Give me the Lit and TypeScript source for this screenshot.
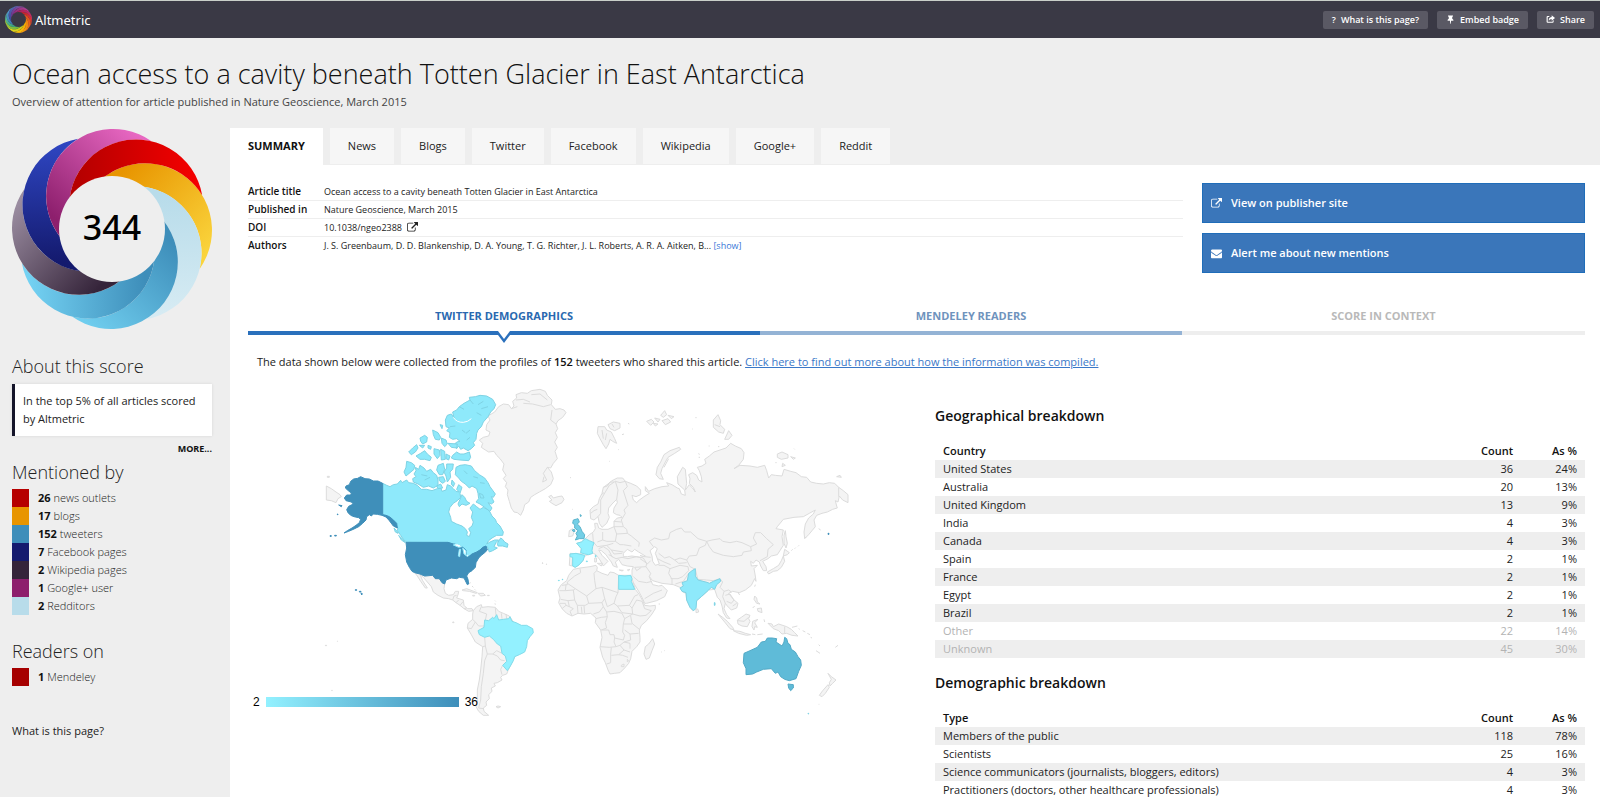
import { LitElement, html, svg, css } from "lit";
import { customElement, property } from "lit/decorators.js";

type Stop = [string, string];

/** Ring of overlapping discs, each one tucked under its clockwise neighbour. */
@customElement("swirl-ring")
class SwirlRing extends LitElement {
  @property({ attribute: false }) colors: Stop[] = [];
  @property({ type: Number }) start = 0;
  @property({ type: Number }) hole = 53;
  @property() holeColor = "#eee";

  static styles = css`
    :host { display: block; }
    svg { display: block; width: 100%; height: 100%; }
  `;

  render() {
    const n = this.colors.length;
    const R = 67;
    const off = 33;
    const step = 360 / n;
    const half = (step / 2) * (Math.PI / 180);
    const mid = off * Math.cos(half);
    const reach = Math.sqrt(R * R - (off * Math.sin(half)) ** 2);
    const pt = (deg: number, r: number) => [
      +(100 + r * Math.cos((deg * Math.PI) / 180)).toFixed(2),
      +(100 + r * Math.sin((deg * Math.PI) / 180)).toFixed(2),
    ];
    return html`<svg viewBox="0 0 200 200" aria-hidden="true">
      ${this.colors.map(([from, to], i) => {
        const a = this.start + i * step;
        const [ox, oy] = pt(a + step / 2, mid + reach);
        const [ix, iy] = pt(a + step / 2, mid - reach);
        const [gx, gy] = pt(a - 85, 53);
        const [hx, hy] = pt(a + 15, 96);
        return svg`
          <linearGradient id="g${i}" gradientUnits="userSpaceOnUse" x1=${gx} y1=${gy} x2=${hx} y2=${hy}>
            <stop offset="0" stop-color=${from}></stop><stop offset="1" stop-color=${to}></stop>
          </linearGradient>
          <path fill="url(#g${i})" d="M${ox},${oy} A${R},${R} 0 1 0 ${ix},${iy} A${R},${R} 0 0 1 ${ox},${oy}Z"></path>`;
      })}
      <circle cx="100" cy="100" r=${this.hole} fill=${this.holeColor}></circle>
    </svg>`;
  }
}

@customElement("world-map")
class WorldMap extends LitElement {
  static styles = css`
    :host { display: block; }
    svg { display: block; width: 100%; height: auto; }
    path { stroke: #dcdcdc; stroke-width: 3; stroke-linejoin: round; fill: #f4f4f4; }
    .line { fill: none; }
    .sea { fill: #fff; }
    .c2 { fill: #93f1ff; stroke: #82dcea; }
    .c4 { fill: #8ee9fb; stroke: #7fd3e4; }
    .c13 { fill: #73cfe6; stroke: #5cb4cc; }
    .c20 { fill: #5fbbd8; stroke: #52a9c6; }
    .c36 { fill: #3f8fba; stroke: #3f8fba; }
    .sound { stroke: #fff; }
    .fjord { stroke: #7fd3e4; }
    .lake { stroke: #8ee9fb; }
  `;

  render() {
    return html`<svg viewBox="0 0 1680 1035" role="img" aria-label="Tweeters by country">
      <g>
        <path d="M508,180 L520,172 536,168 540,156 528,150 530,134 540,120 534,108 554,96 566,80 580,72 596,74 604,86 612,78 608,64 620,54 618,44 634,38 652,40 664,32 690,28 706,34 712,46 726,60 724,74 736,88 750,86 762,90 768,98 758,112 744,122 738,132 743,146 736,158 742,172 734,186 742,202 735,214 742,236 730,250 722,264 712,262 724,276 730,296 722,314 706,326 688,336 674,344 662,352 656,366 644,374 640,390 632,406 622,398 612,396 604,384 598,364 592,344 594,330 586,320 590,308 580,296 588,286 578,270 582,252 570,236 560,226 552,214 536,216 526,210 514,202 518,190Z"></path>
        <path class="line" d="M604,86 L622,80 M618,60 L640,58 660,66 M664,44 L690,42 712,60 M640,70 L668,72 700,80 722,74 M726,90 L722,120 738,132 M712,262 L700,280 710,300 698,306 702,290"></path>
        <path d="M716,350 L724,346 730,354 744,350 756,348 762,358 756,368 738,377 726,370 718,364 726,360Z"></path>
        <path d="M49,318 L64,326 78,336 90,344 94,350 84,356 78,368 64,362 49,360Z M52,289h6v3h-6z"></path>
        <path class="c4" d="M218,310 L230,316 240,320 250,314 262,312 272,301 276,308 290,300 296,308 310,310 322,316 334,328 350,328 366,332 382,326 392,322 396,334 408,330 412,314 422,318 430,326 438,334 448,336 440,328 446,314 456,322 450,340 452,352 442,362 430,370 420,382 416,396 422,412 424,424 440,432 456,438 466,446 472,456 470,466 478,470 482,458 476,446 486,438 490,426 484,412 488,396 480,384 490,372 500,380 510,388 520,382 532,388 540,396 546,408 556,418 560,428 570,438 580,456 578,466 560,466 546,474 536,482 530,492 540,486 554,480 566,480 558,488 552,500 562,504 548,512 538,516 532,500 520,504 500,516 472,530 462,510 446,496 414,488 290,487 280,478 272,466 262,452 264,444 250,430 238,416 228,408 218,404Z"></path>
        <path class="c4" d="M438,262 L450,256 466,254 484,258 494,272 508,284 524,294 534,308 540,320 556,342 550,352 544,350 552,366 544,372 534,368 546,384 540,394 524,382 510,372 498,366 506,356 504,340 500,326 486,318 478,324 466,312 454,304 446,294 436,284Z"></path>
        <path class="c4" d="M290,244 L304,248 314,256 312,268 300,278 288,288 282,276 288,262Z M316,262 L326,268 330,256 342,264 350,274 362,268 370,278 380,286 384,300 384,316 370,324 356,318 340,322 324,312 310,306 308,296 318,290 312,282 318,272Z M384,256 L400,250 404,268 398,284 388,284 380,270Z M410,252 L430,252 428,268 420,276 422,292 412,306 408,288 402,276 410,264Z M386,292 L400,290 406,304 398,310 388,302Z M380,318 L392,312 398,324 384,326Z M426,300 l8,10 -4,10 -6,-8z"></path>
        <path class="c4" d="M448,80 L462,70 480,60 478,52 496,50 510,46 530,48 548,58 557,74 552,86 542,96 534,110 520,126 514,140 504,150 500,160 498,178 490,188 494,196 484,206 474,212 460,204 452,208 446,198 440,206 430,196 440,186 450,184 440,176 428,178 418,172 420,158 410,152 418,144 408,140 406,120 412,106 424,102 432,114 428,96 440,90Z"></path>
        <path class="c4" d="M428,226 L440,216 450,222 462,222 478,216 482,232 476,242 450,240 432,238 424,234Z M318,228 L332,220 344,212 352,222 364,232 360,242 344,238 330,238Z M296,216 L308,204 320,194 324,204 316,216 304,224Z M330,174 L344,166 352,172 350,186 338,192 332,184Z M368,150 L384,158 392,172 388,180 376,178 370,164Z M394,174 L408,180 412,192 404,200 396,190Z M372,206 L388,210 390,226 382,236 372,222Z M392,208 L404,214 406,238 394,240Z M414,190 L442,192 440,204 424,202Z M390,134 l8,2 -2,10z M328,196 l16,0 -6,8z M354,196 l10,4 -2,8 -8,-4z M408,222 l12,6 -4,12 -8,-4z"></path>
        <path class="c4" d="M456,344 L464,352 470,364 480,370 468,376 456,372 448,380 444,372 450,358Z M508,340 l10,4 4,10 -10,0z M562,490 L572,474 578,478 584,486 594,492 592,502 578,498 564,498Z"></path>
        <path class="line sound" d="M430,112 Q440,128 460,127 Q474,126 484,116"></path>
        <path class="line fjord" d="M448,80 l14,8 M480,60 l10,12 M520,64 l-16,10 M534,80 l-20,6 M500,98 l14,8 M420,140 l16,-2 M456,150 l10,8 M480,150 l-12,10 M470,180 l10,-8 M334,284 l18,4 M344,300 l16,-8 M462,272 l10,10 M490,290 l14,4 M510,308 l14,2"></path>
        <path class="c36" d="M218,310 L204,303 190,303 178,297 165,296 152,290 143,295 131,297 122,304 118,314 108,318 106,324 116,333 124,339 122,345 110,345 103,354 108,362 124,366 130,372 116,379 110,389 114,398 122,406 132,410 146,413 152,418 148,428 138,436 126,444 112,452 102,459 116,454 132,447 146,440 158,430 168,420 170,410 178,404 184,408 190,402 202,403 216,406 228,411 238,422 250,438 262,444 260,430 248,418 238,410 228,406 218,404Z M86,375l10,2 -2,3z M74,466h5v2h-5z M60,467h4v2h-4z M82,402h2v2h-2z"></path>
        <path class="c4" d="M252,444 l8,8 4,8 -8,-4z M266,466 l12,12 8,10 -12,-8z"></path>
      </g>
      <g transform="translate(0 480)">
        <path d="M314,98 L330,102 344,108 368,106 376,116 388,116 396,128 404,132 402,146 406,160 416,166 430,164 436,154 446,154 444,164 440,174 460,180 462,196 472,206 486,206 490,212 476,214 462,206 450,196 438,188 428,180 416,176 400,174 384,166 370,156 364,140 352,126 340,112 330,104 338,122 352,144 346,144 332,124 322,108Z"></path>
        <path class="line" d="M428,180 L432,168 440,166 M438,188 L446,180 M450,196 L460,184 M462,206 L470,204"></path>
        <path d="M456,150 L470,146 486,152 502,158 498,160 478,154 460,152Z M504,160 L520,160 526,166 512,168Z M488,166h6v2h-6z M532,166h6v1h-6z M478,130l4,-2 M486,138l4,4 M494,148l3,3 M555,182l2,2 M555,190l1,4"></path>
        <path d="M490,212 L500,200 514,194 516,202 534,200 556,202 566,214 580,220 598,228 620,260 640,290 620,340 594,392 590,402 578,406 572,412 576,420 562,428 552,430 556,438 544,444 546,454 536,464 538,476 528,486 530,496 520,504 522,514 536,526 520,526 506,514 498,500 502,484 502,450 508,420 512,390 516,350 518,320 496,306 484,284 472,264 474,250 488,238 488,222Z"></path>
        <path class="line" d="M514,200 L508,214 530,222 526,240 M556,204 558,226 M574,220 576,236 M588,222 590,236 M474,264 L484,266 496,246 488,238 M496,246 L506,258 522,258 M524,292 L526,318 518,320 M526,318 L532,342 548,342 560,332 576,340 M548,342 L562,348 572,360 584,362 M578,376 L572,388 576,404 M532,342 L524,362 520,400 514,440 512,480 506,504 520,506"></path>
        <path class="c2" d="M524,240 L536,242 548,232 552,236 560,224 566,240 580,238 596,236 600,230 606,244 618,248 634,256 650,256 668,266 670,278 660,290 652,302 650,320 644,336 628,344 614,350 610,362 600,380 592,392 578,376 590,364 586,348 576,340 572,318 562,312 550,298 538,288 524,292 508,284 504,272 522,262Z"></path>
        <path class="c36" d="M288,7 L414,7 430,12 446,14 458,22 468,30 470,50 486,42 500,36 510,30 518,22 528,18 532,30 524,38 514,46 506,54 498,68 496,82 486,92 476,98 470,108 474,118 476,132 472,134 466,122 462,114 448,112 440,116 424,114 408,120 404,132 396,128 388,116 376,116 368,106 344,108 330,102 314,98 306,94 298,82 290,66 286,44 290,24Z M136,149h4v2h-4z M148,154h5v2h-5z M153,159l4,2 -2,4z"></path>
        <path class="sea lake" d="M430,15 Q444,6 456,20 L446,22Z M448,28 l4,0 -3,22 -4,-2z M458,24 l10,8 0,14 -6,-4z M468,46 l16,-6 -12,10z"></path>
        <path d="M558,500 l6,-2 8,2 -8,4z M428,246h4v2h-4z M46,316h4v1h-4z M82,303h1v1h-1z M65,451h2v1h-2z M697,69h2v1h-2z M709,72h1v1h-1z"></path>
      </g>
      <g transform="translate(690 0)">
        <path d="M150,390 L160,380 174,372 178,356 186,340 190,322 204,312 216,302 232,294 248,294 256,304 272,310 290,318 302,330 302,344 288,350 276,346 280,360 290,368 298,360 312,350 328,340 316,332 316,320 326,334 344,326 366,320 386,318 380,308 396,314 412,324 418,326 424,342 436,346 434,330 414,312 412,290 420,276 428,262 436,268 438,290 440,310 436,330 448,314 462,330 466,336 460,322 448,310 450,296 446,284 458,278 470,286 476,300 486,306 484,290 478,272 472,262 486,258 498,250 494,238 508,228 522,216 540,210 558,204 572,190 586,198 604,206 612,218 610,238 596,256 582,266 600,256 630,258 652,262 674,256 680,272 686,294 694,284 706,286 726,288 732,268 752,274 768,278 784,290 800,292 812,306 830,310 850,312 868,308 884,310 896,322 910,332 924,344 924,368 908,360 898,348 894,366 886,362 890,378 892,384 878,388 862,396 846,400 830,406 822,420 826,440 816,452 806,464 794,476 792,456 796,432 806,414 820,402 826,390 808,400 790,410 762,412 730,418 712,440 708,446 730,450 726,470 730,496 712,524 694,528 684,536 668,544 678,560 680,572 670,572 662,558 658,546 648,540 640,550 632,544 634,558 652,556 642,566 646,588 648,604 644,596 634,616 616,630 598,638 578,634 566,640 580,658 594,670 590,684 574,690 562,678 556,670 552,686 560,704 570,716 560,714 550,698 546,678 540,660 532,652 524,628 506,630 484,650 470,662 466,686 458,692 450,682 440,660 438,640 428,636 420,622 400,614 384,612 366,610 352,606 338,602 328,590 338,614 356,618 366,616 382,632 374,650 350,662 320,670 314,670 306,652 296,634 284,614 274,598 276,586 276,570 280,560 262,558 246,554 240,544 236,538 226,546 232,562 220,558 214,546 206,536 198,524 184,512 176,510 186,526 204,544 196,552 190,558 180,540 168,524 160,520 150,522 140,526 132,530 128,544 116,556 104,562 98,558 88,556 90,520 122,522 124,506 110,490 124,486 136,476 148,464 160,456 166,446 164,430 172,430 176,444 186,448 204,448 222,440 222,424 232,414 246,412 240,406 230,404 220,398 222,384 232,368 230,358 216,372 206,384 204,400 208,412 200,430 186,442 178,430 174,410 162,420 152,416Z"></path>
        <path class="sea" d="M250,520 L262,508 276,516 284,508 296,516 316,528 300,532 276,528 262,530 250,530Z M330,512 L344,500 352,506 346,520 352,536 358,552 346,556 338,544 336,528Z"></path>
        <path class="line" d="M256,304 L262,320 250,332 264,376 252,390 256,400 244,420 250,440 260,448 262,460 274,468 298,488 296,500 M174,410 L182,400 182,360 196,336 208,316 226,304 240,308 256,304 M226,304 L234,330 230,358 M300,526 L314,530 332,532 M300,536 L312,544 322,552 332,542 M896,322 L896,350 M340,500 L328,484 344,474 364,480 386,476 390,458 410,448 424,444 434,456 452,456 474,476 500,484 496,496 478,504 470,526 448,528 440,540 420,534 404,540 388,530 374,534 356,520 M500,484 L516,480 540,476 548,484 570,488 590,484 606,488 632,500 634,512 610,516 606,526 580,530 550,526 520,516 508,500 500,484 M632,500 L650,492 640,474 646,458 662,458 680,476 700,494 684,508 682,530 660,542 M188,456 L188,480 200,484 226,484 230,462 222,440 M230,462 L262,460 M222,440 L250,440 M222,424 L244,426 M226,484 L240,494 250,494 274,498 M158,460 L160,486 172,500 200,496 220,490 M188,480 L172,486 M176,506 L190,500 206,510 216,530 228,536 246,532 M200,496 L214,510 250,516 M214,510 L222,522 246,520 M206,524 L218,530 M246,532 L264,536 290,530 310,534 320,550 318,560 284,562 M318,560 L332,580 328,590 M284,562 L290,572 304,562 M280,590 L296,604 320,608 336,604 M314,656 L340,640 366,630 M356,556 L372,556 390,566 386,580 396,598 396,612 M390,566 L420,556 444,560 446,572 428,590 414,596 392,596 M352,536 L372,546 392,554 M404,540 L416,550 440,548 M440,540 L450,560 466,568 474,600 504,608 506,628 M474,598 L500,600 520,602 540,596 548,606 540,622 552,634 566,630 574,636 M552,634 L548,650 556,670 M556,646 L570,642 582,660 574,670 560,664 M578,678 L590,670 M98,530 L96,556 M406,612 L430,604 446,580"></path>
        <path class="line" d="M190,322 L202,318 210,306 222,306 M152,400 L162,392 172,388 M184,344 L192,338"></path>
        <path d="M352,262 L362,246 372,224 390,212 418,202 422,208 404,220 384,232 376,246 366,266 362,280 370,298 358,296 348,284Z M174,140 L194,140 200,150 214,156 224,176 230,190 218,184 210,178 206,192 198,206 190,194 180,176 172,160Z M204,134 L220,126 240,130 240,144 224,152 210,146Z M320,124 L334,118 342,126 332,136Z M344,114 L360,118 354,126Z M362,106 L374,92 380,104 370,112Z M366,122 L384,116 392,126 376,134Z M384,106 l18,4 -8,6z M340,130 l14,2 -8,6z M520,120 L534,104 542,122 540,134 554,148 550,160 536,156 520,142Z M566,152 L576,166 566,178 554,178Z M712,222 L726,216 744,224 744,234 724,238 712,232Z M752,230 l14,4 -6,4z M728,250 l8,6 -10,4z M890,290 l10,-4 4,6z M736,452 L738,470 742,490 738,504 732,490 732,466Z M734,508 L748,518 742,524 730,528Z M730,528 L734,544 724,562 712,572 700,574 686,582 682,576 700,566 716,556 724,542Z M88,452 L98,446 102,456 98,468 86,470Z M172,550 l16,0 -4,8z M164,534l6,0 -1,12 -5,0z M238,570l12,1 -4,2z M262,570l8,-2 -4,4z M264,130l4,2 M246,164l6,-2 M234,208l2,1 M208,244l2,0 M90,293l3,0 M96,388l2,0 M466,113l4,0 M456,147l2,0 M476,220l2,4 M476,232l4,0 M506,198l3,0 M534,200l4,0 M762,206l2,2 M706,248l4,0 M754,512l4,-4 M764,506l3,-3 M774,499l3,-3 M796,474l2,-3 M836,446l6,4"></path>
        <path class="line" d="M186,150 L190,176 M200,160 L196,180 M216,132 L222,142 M524,134 L540,140 M386,236 L372,262"></path>
        <path class="c2" d="M110,490 L124,486 136,476 148,482 162,488 158,500 156,512 158,520 146,524 134,522 122,518 124,506Z M90,522 L108,520 134,526 130,540 118,554 106,562 98,558 98,532 90,530Z M166,526h2v5h-2z M139,543h3v2h-3z"></path>
        <path class="c13" d="M100,420 L114,416 118,426 112,432 120,440 126,454 134,464 132,476 118,476 106,480 112,468 108,460 114,452 104,444 104,434 98,430Z M120,404l4,2 -2,4z M97,450l6,-2 2,6 -6,0z"></path>
        <path class="c36" d="M864,460h3v3h-3z"></path>
      </g>
      <g transform="translate(690 510)">
        <path d="M100,58 L120,54 150,50 168,46 172,52 170,62 186,70 204,76 210,66 222,68 236,76 272,76 278,92 286,118 298,134 308,152 314,166 330,168 346,166 346,176 336,192 320,212 304,226 298,240 300,262 300,276 290,290 276,304 272,326 266,340 254,354 240,368 224,370 210,372 204,360 196,338 188,322 180,292 186,262 182,240 166,218 168,204 152,190 132,192 114,190 96,198 80,190 66,176 56,158 60,144 54,120 64,104 80,92 86,76Z"></path>
        <path class="line" d="M120,56 L122,68 104,78 82,96 M82,96 L82,104 66,106 M82,100 L106,116 140,138 168,116 164,92 162,70 170,62 M168,116 L186,112 234,128 236,76 M58,122 L76,122 78,104 M76,122 L100,120 104,150 84,152 62,148 M106,116 L100,120 M140,138 L146,160 136,166 112,166 104,150 M84,152 L88,170 100,176 M112,166 L114,190 M124,170 L126,190 M132,168 L134,190 M146,160 L186,158 194,146 186,112 M186,158 L190,170 178,186 160,192 M194,146 L202,170 222,160 228,140 234,128 M236,118 L284,118 M222,160 L232,168 268,166 284,138 294,134 M232,168 L246,188 278,192 276,174 268,166 M276,174 L290,150 306,154 M306,154 L314,176 334,182 318,196 300,198 278,192 M190,170 L200,186 222,184 246,190 M200,186 L202,200 184,202 168,206 M202,200 L196,218 200,234 184,240 M184,240 L206,240 210,254 222,254 224,264 250,270 254,256 248,246 250,222 254,206 246,190 M254,206 L278,192 M272,198 L276,220 298,238 M250,222 L276,222 M254,240 L270,252 296,250 M270,252 L272,270 252,276 240,286 228,290 222,276 224,264 M180,290 L208,292 228,290 M214,292 L212,312 212,338 200,342 M240,286 L252,300 236,314 214,316 M252,300 L270,306 M252,276 L270,280 270,296 M236,314 L248,316 264,322 M244,346 L252,342 252,350 244,350Z M262,328 l4,4 -4,4z M66,176 L78,166 88,170 M60,160 L76,160 78,166 M96,198 L90,184 100,176"></path>
        <path class="c2" d="M236,76 L255,78 272,76 276,86 274,94 284,118 236,118Z M55,91h3v1h-3z M66,88h3v1h-3z"></path>
        <path class="c4" d="M446,70 L456,62 466,56 466,78 474,90 504,98 508,100 520,94 540,86 542,94 530,104 524,118 514,112 506,120 484,140 470,152 468,176 460,182 450,172 440,150 438,128 426,124 420,114 430,108 426,98 442,92Z M523,158h2v8h-2z"></path>
        <path d="M338,266 L344,282 336,302 328,324 318,328 312,312 316,290 326,282Z M468,176 L474,178 476,186 468,188Z M534,192 L548,202 562,214 578,232 582,240 570,236 554,216Z M580,242 L600,244 616,250 632,254 620,256 596,250Z M592,210 L604,202 618,192 630,196 626,206 630,214 622,230 606,228 594,222Z M638,214 L654,208 644,218 652,232 644,230 642,240 636,230Z M684,220 L696,222 700,230 716,222 740,230 754,238 764,248 774,258 756,256 740,250 726,252 716,242 700,236Z M644,138 L650,144 652,156 660,162 650,160 642,148Z M652,176 L664,174 666,188 654,184Z M638,174l6,-6 M636,252l10,2 M652,254l16,-2 M672,208l2,8 M756,232l16,-4 M776,236l3,2 M788,242l8,4 M802,250l8,4 M812,262l4,2 M828,302l12,8 M836,284l4,4 M886,292l8,-6 M356,162l4,0 M364,306l2,0 M372,302l2,0 M836,463l2,0 M646,104l-2,6 M594,130l6,4 M6,39l3,0 M18,43l2,0"></path>
        <path class="line" d="M734,230 V250 M594,212 L612,214 626,202"></path>
        <path d="M864,370 L874,380 888,390 878,400 870,408 868,398 874,388Z M864,404 L868,412 856,430 846,440 838,436 848,422Z"></path>
        <path class="c20" d="M612,310 L630,302 652,292 664,276 676,274 682,264 696,264 710,266 708,276 726,288 732,276 734,262 740,266 744,280 750,284 754,298 766,306 774,320 782,330 784,346 776,364 768,386 748,392 734,388 722,380 714,366 706,370 694,356 670,358 650,366 638,372 618,374 618,356 610,338Z M744,402 L760,404 760,414 752,422 746,414Z"></path>
        <path class="c4" d="M804,490h2v2h-2z"></path>
      </g>
    </svg>`;
  }
}

const linkIcon = svg`<path d="M1408 928v320q0 119-84.5 203.5t-203.5 84.5h-832q-119 0-203.5-84.5t-84.5-203.5v-832q0-119 84.5-203.5t203.5-84.5h704q14 0 23 9t9 23v64q0 14-9 23t-23 9h-704q-66 0-113 47t-47 113v832q0 66 47 113t113 47h832q66 0 113-47t47-113v-320q0-14 9-23t23-9h64q14 0 23 9t9 23zm384-864v512q0 26-19 45t-45 19-45-19l-176-176-652 652q-10 10-23 10t-23-10l-114-114q-10-10-10-23t10-23l652-652-176-176q-19-19-19-45t19-45 45-19h512q26 0 45 19t19 45z"></path>`;
const mailIcon = svg`<path d="M1792 710v794q0 66-47 113t-113 47h-1472q-66 0-113-47t-47-113v-794q44 49 101 87 362 246 497 345 57 42 92.5 65.5t94.5 48 110 24.5h2q51 0 110-24.5t94.5-48 92.5-65.5q170-123 498-345 57-39 100-87zm0-294q0 79-49 151t-122 123q-376 261-468 325-10 7-42.5 31t-54 38.5-52 32.5-57.5 27-50 9h-2q-23 0-50-9t-57.5-27-52-32.5-54-38.5-42.5-31q-91-64-262-182.5t-205-142.5q-62-42-117-115.5t-55-136.5q0-78 41.5-130t118.5-52h1472q65 0 112.5 47t47.5 113z"></path>`;
const pinIcon = svg`<path d="M400 90h992v190l-150 70v420q250 120 250 380h-480l-60 580h-112l-60-580h-480q0-260 250-380v-420l-150-70z"></path>`;
const shareIcon = svg`<path d="M1130 60l662 530-662 530v-300q-400-10-560 330-120-620 560-760zM780 220q-120 60-180 160h-200q-60 0-60 60v860q0 60 60 60h860q60 0 60-60v-150l200-160v350q0 200-200 200h-980q-220 0-220-220v-920q0-180 220-180z"></path>`;

const icon = (shape: unknown) =>
  html`<svg class="icon" viewBox="0 0 1792 1792" aria-hidden="true">${shape}</svg>`;

const scoreColors: Stop[] = [
  ["#e89500", "#fad43c"],
  ["#b8dcea", "#d6ebf3"],
  ["#3e8eba", "#6fcdee"],
  ["#3e8eba", "#74d2f3"],
  ["#35243a", "#9a8ca0"],
  ["#141a6e", "#2e45c0"],
  ["#8d1f6d", "#e868c2"],
  ["#b60000", "#f40000"],
];

const logoColors: Stop[] = [
  ["#c3202f", "#e9442b"],
  ["#e04e1c", "#f0751a"],
  ["#ee7d11", "#f9a510"],
  ["#f6a800", "#fdd20a"],
  ["#c9cc1a", "#e6dc1c"],
  ["#6bb43f", "#a9cb35"],
  ["#3c9f7a", "#5cc3a0"],
  ["#3b78b4", "#58a4cf"],
  ["#41489a", "#5c6fb8"],
  ["#6b3890", "#8a55a6"],
  ["#932a7c", "#b4479a"],
  ["#a9205a", "#cc2f66"],
];

const mentions: [string, string, string][] = [
  ["#b60000", "26", "news outlets"],
  ["#e89500", "17", "blogs"],
  ["#3e8eba", "152", "tweeters"],
  ["#141a6e", "7", "Facebook pages"],
  ["#35243a", "2", "Wikipedia pages"],
  ["#8d1f6d", "1", "Google+ user"],
  ["#b8dcea", "2", "Redditors"],
];
const readers: [string, string, string][] = [["#a60000", "1", "Mendeley"]];

const countries = [
  ["United States", "36", "24%"],
  ["Australia", "20", "13%"],
  ["United Kingdom", "13", "9%"],
  ["India", "4", "3%"],
  ["Canada", "4", "3%"],
  ["Spain", "2", "1%"],
  ["France", "2", "1%"],
  ["Egypt", "2", "1%"],
  ["Brazil", "2", "1%"],
  ["Other", "22", "14%"],
  ["Unknown", "45", "30%"],
];
const types = [
  ["Members of the public", "118", "78%"],
  ["Scientists", "25", "16%"],
  ["Science communicators (journalists, bloggers, editors)", "4", "3%"],
  ["Practitioners (doctors, other healthcare professionals)", "4", "3%"],
];

@customElement("app-root")
class AppRoot extends LitElement {
  static styles = css`
    * { box-sizing: border-box; }
    :host {
      display: block;
      height: 100vh;
      overflow: hidden;
      background: #eee;
      color: #222;
      font: 11px/18px "Open Sans", "Noto Sans", sans-serif;
    }
    h1, h2, h3, p, ul, dl, dd { margin: 0; padding: 0; font-weight: 300; }
    a { color: inherit; text-decoration: none; }
    b, th, dt { font-weight: 600; color: #111; }
    button { border: 0; margin: 0; font: inherit; color: inherit; cursor: pointer; text-align: left; }
    .icon { width: 11px; height: 11px; fill: currentColor; flex: none; }

    .bar { display: flex; align-items: center; height: 38px; padding: 0 6px 0 5px; background: #3a3945; border-top: 1px solid #c9cfc9; }
    .brand { display: flex; align-items: center; gap: 3px; color: #fff; font: 13px/20px "Noto Sans", sans-serif; margin-right: auto; }
    .brand swirl-ring { width: 27px; height: 27px; }
    .tools { display: flex; gap: 9px; }
    .tool { display: flex; align-items: center; gap: 5px; height: 18px; padding: 0 9px; border-radius: 2px; background: #5a5964; color: #fff; font-size: 9px; font-weight: 600; }
    .tool .icon { width: 9px; height: 9px; }

    .title { padding: 16px 12px 18px; }
    h1 { font-size: 27px; line-height: 40px; color: #111; }
    .title p { line-height: 16px; color: #444; font-weight: 400; }

    .page { display: grid; grid-template-columns: 230px minmax(0, 1fr); }
    .side { padding: 1px 18px 0 12px; }
    .badge { position: relative; width: 200px; height: 200px; }
    .score { position: absolute; inset: 0; display: flex; align-items: center; justify-content: center; padding-bottom: 4px; font: 500 34px/48px "Noto Sans", sans-serif; color: #000; }
    h2 { font-size: 18px; line-height: 24px; color: #222; }
    .about { margin-top: 25px; }
    .note { margin-top: 6px; padding: 8px; background: #fff; border-left: 3px solid #15152a; box-shadow: 0 0 3px rgba(0, 0, 0, 0.1); font-weight: 400; }
    .more { display: block; margin: 5px 0 3px; text-align: right; font-size: 9px; line-height: 16px; font-weight: 700; color: #111; }
    .legend { list-style: none; margin-top: 5px; }
    .legend li { display: flex; gap: 9px; font-weight: 300; color: #222; }
    .legend b { font-weight: 700; }
    .swatch { width: 17px; height: 18px; }
    .readers { margin-top: 24px; }
    .what { display: block; margin-top: 36px; }

    .tabs { display: flex; gap: 7px; height: 37px; }
    .tab { padding: 0 18px; line-height: 36px; height: 36px; background: #f6f6f6; }
    .tab.on { height: 37px; background: #fff; font-weight: 700; color: #111; }
    .panel { background: #fff; padding: 18px 15px 0 18px; min-height: 100vh; }
    .top { display: grid; grid-template-columns: 935fr 383fr; gap: 19px; }
    .facts { font-size: 10px; }
    .fact { display: grid; grid-template-columns: 76px 1fr; border-bottom: 1px solid #eee; line-height: 17px; }
    .fact:last-child { border: 0; }
    dd { font-size: 9px; font-weight: 400; }
    dd .icon { margin-left: 3px; vertical-align: -2px; }
    .show { color: #3a78d8; }
    .actions { display: flex; flex-direction: column; gap: 10px; }
    .action { display: flex; align-items: center; gap: 9px; height: 40px; padding: 0 8px; background: #3a76ba; border: 1px solid #1f6db9; color: #fff; font-weight: 600; }

    .views { display: grid; grid-template-columns: 512fr 422fr 403fr; margin-top: 31px; }
    .view { position: relative; background: none; padding: 3px 0 6px; text-align: center; font-weight: 700; color: #b9b9b9; border-bottom: 4px solid #eee; }
    .view.near { color: #6f93bd; border-color: #94b3d5; }
    .view.on { color: #2a69b0; border-color: #2a70bc; }
    .caret { position: absolute; left: 50%; top: 100%; width: 18px; height: 12px; margin-left: -9px; }
    .intro { margin-top: 18px; padding-left: 9px; font-weight: 400; }
    .intro a { color: #3a78c8; text-decoration: underline; }

    .data { display: grid; grid-template-columns: 687fr 650fr; margin-top: 9px; }
    .map { position: relative; padding-left: 62px; }
    world-map { width: 560px; max-width: 100%; }
    .scale { position: absolute; left: 5px; bottom: 15px; display: flex; align-items: center; gap: 6px; font: 12px/16px "Liberation Sans", sans-serif; color: #000; }
    .ramp { width: 193px; height: 10px; background: linear-gradient(90deg, #93f1ff, #3e8eba); }
    .data-left { align-self: start; }
    h3 { font-size: 14px; line-height: 20px; font-weight: 600; color: #111; margin-top: 26px; }
    h3 + table { margin-top: 16px; }
    table { width: 100%; border-collapse: collapse; }
    th, td { padding: 0 8px; text-align: left; line-height: 18px; }
    .num { text-align: right; width: 64px; }
    tbody tr:nth-child(odd) { background: #eee; }
    .faint td { color: #b3b3b3; }
    table + h3 { margin-top: 15px; }
  `;

  private list(items: [string, string, string][]) {
    return html`<ul class="legend">
      ${items.map(([color, n, label]) => html`<li>
        <span class="swatch" style="background:${color}"></span><a href="#"><b>${n}</b> ${label}</a>
      </li>`)}
    </ul>`;
  }

  private table(head: string, rows: string[][]) {
    return html`<table>
      <thead><tr><th>${head}</th><th class="num">Count</th><th class="num">As %</th></tr></thead>
      <tbody>
        ${rows.map(([name, count, share]) => html`<tr class=${name === "Other" || name === "Unknown" ? "faint" : ""}>
          <td>${name}</td><td class="num">${count}</td><td class="num">${share}</td>
        </tr>`)}
      </tbody>
    </table>`;
  }

  render() {
    return html`
      <header class="bar">
        <a class="brand" href="#"><swirl-ring .colors=${logoColors} .start=${20} .hole=${55} .holeColor=${"#3a3945"}></swirl-ring>Altmetric</a>
        <div class="tools">
          <button class="tool"><span>?</span>What is this page?</button>
          <button class="tool">${icon(pinIcon)}Embed badge</button>
          <button class="tool">${icon(shareIcon)}Share</button>
        </div>
      </header>
      <div class="title">
        <h1>Ocean access to a cavity beneath Totten Glacier in East Antarctica</h1>
        <p>Overview of attention for article published in Nature Geoscience, March 2015</p>
      </div>
      <div class="page">
        <aside class="side">
          <div class="badge">
            <swirl-ring .colors=${scoreColors} .start=${2}></swirl-ring>
            <div class="score">344</div>
          </div>
          <h2 class="about">About this score</h2>
          <p class="note">In the top 5% of all articles scored by Altmetric</p>
          <a class="more" href="#">MORE...</a>
          <h2>Mentioned by</h2>
          ${this.list(mentions)}
          <h2 class="readers">Readers on</h2>
          ${this.list(readers)}
          <a class="what" href="#">What is this page?</a>
        </aside>
        <main>
          <nav class="tabs">
            ${["SUMMARY", "News", "Blogs", "Twitter", "Facebook", "Wikipedia", "Google+", "Reddit"].map(
              (t, i) => html`<a class=${i ? "tab" : "tab on"} href="#">${t}</a>`
            )}
          </nav>
          <div class="panel">
            <div class="top">
              <dl class="facts">
                <div class="fact"><dt>Article title</dt><dd>Ocean access to a cavity beneath Totten Glacier in East Antarctica</dd></div>
                <div class="fact"><dt>Published in</dt><dd>Nature Geoscience, March 2015</dd></div>
                <div class="fact"><dt>DOI</dt><dd><a href="#">10.1038/ngeo2388 ${icon(linkIcon)}</a></dd></div>
                <div class="fact"><dt>Authors</dt><dd>J. S. Greenbaum, D. D. Blankenship, D. A. Young, T. G. Richter, J. L. Roberts, A. R. A. Aitken, B... <a class="show" href="#">[show]</a></dd></div>
              </dl>
              <div class="actions">
                <a class="action" href="#">${icon(linkIcon)}View on publisher site</a>
                <a class="action" href="#">${icon(mailIcon)}Alert me about new mentions</a>
              </div>
            </div>
            <div class="views">
              <button class="view on">TWITTER DEMOGRAPHICS
                <svg class="caret" viewBox="0 0 18 12" aria-hidden="true"><path d="M0,0 H18 L9,12Z" fill="#2a70bc"></path><path d="M3,0 H15 L9,8Z" fill="#fff"></path></svg>
              </button>
              <button class="view near">MENDELEY READERS</button>
              <button class="view">SCORE IN CONTEXT</button>
            </div>
            <p class="intro">The data shown below were collected from the profiles of <b>152</b> tweeters who shared this article. <a href="#">Click here to find out more about how the information was compiled.</a></p>
            <div class="data">
              <div class="data-left">
                <div class="map">
                  <world-map></world-map>
                  <div class="scale"><span>2</span><span class="ramp"></span><span>36</span></div>
                </div>
              </div>
              <div>
                <h3>Geographical breakdown</h3>
                ${this.table("Country", countries)}
                <h3>Demographic breakdown</h3>
                ${this.table("Type", types)}
              </div>
            </div>
          </div>
        </main>
      </div>
    `;
  }
}
